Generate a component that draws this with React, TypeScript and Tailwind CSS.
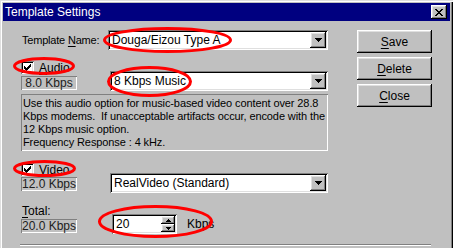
import React from "react"

const raised =
  "shadow-[inset_-1px_-1px_0_#000,inset_1px_1px_0_#fff,inset_-2px_-2px_0_#808080,inset_2px_2px_0_#dfdfdf]"
const sunken =
  "shadow-[inset_1px_1px_0_#808080,inset_-1px_-1px_0_#fff,inset_2px_2px_0_#000,inset_-2px_-2px_0_#dfdfdf]"
const thin = "shadow-[inset_1px_1px_0_#808080,inset_-1px_-1px_0_#fff]"

function Arrow() {
  return (
    <svg width="7" height="4" viewBox="0 0 7 4">
      <path d="M0 0h7v1h-1v1h-1v1h-1v1h-1v-1h-1v-1h-1v-1h-1z" fill="#000" />
    </svg>
  )
}

function Combo({ value, width }: { value: string; width: string }) {
  return (
    <div className={`${width} h-[20px] bg-white ${sunken} flex items-center p-[2px]`}>
      <span className="flex-1 pl-[2px] text-[12px] leading-none whitespace-nowrap">{value}</span>
      <div className={`w-[16px] h-[16px] bg-[#c0c0c0] ${raised} flex items-center justify-center`}>
        <Arrow />
      </div>
    </div>
  )
}

function Check({ hot, rest }: { hot: string; rest: string }) {
  return (
    <div className="flex items-center h-[13px]">
      <div className={`w-[13px] h-[13px] bg-white ${sunken} flex items-center justify-center`}>
        <svg width="7" height="7" viewBox="0 0 7 7">
          <path d="M0 2h1v1h1v1h1v-1h1v-1h1v-1h1v-1h1v3h-1v1h-1v1h-1v1h-1v1h-1v-1h-1v-1h-1z" fill="#000" />
        </svg>
      </div>
      <span className="ml-[5px] text-[12px] leading-none">
        <span className="underline underline-offset-[2px]">{hot}</span>
        {rest}
      </span>
    </div>
  )
}

function Rate({ value }: { value: string }) {
  return (
    <div className={`w-[56px] h-[14px] ${thin} flex items-center justify-center text-[12px] leading-none text-[#202020] whitespace-nowrap`}>
      {value}
    </div>
  )
}

function Button({ hot, rest }: { hot: string; rest: string }) {
  return (
    <div className={`w-[75px] h-[23px] ${raised} flex items-center justify-center text-[12px] leading-none`}>
      <span className="underline underline-offset-[2px]">{hot}</span>
      {rest}
    </div>
  )
}

export default function App() {
  return (
    <div className="w-[453px] h-[248px] overflow-hidden relative bg-[#c0c0c0] font-[family-name:Liberation_Sans,Arial,sans-serif] text-black">
      <div className="h-[260px] pt-[3px] pl-[3px] pr-[3px] shadow-[inset_1px_1px_0_#dfdfdf,inset_2px_2px_0_#fff,inset_-1px_-1px_0_#000,inset_-2px_-2px_0_#808080]">
        <div className="h-[18px] bg-[#000080] flex items-center justify-between pl-[2px] pr-[3px]">
          <span className="text-white text-[12px] leading-none">Template Settings</span>
          <div className={`w-[16px] h-[14px] bg-[#c0c0c0] ${raised} flex items-center justify-center`}>
            <svg width="8" height="7" viewBox="0 0 8 7">
              <path d="M0 0h2v1h1v1h2v-1h1v-1h2v1h-1v1h-1v1h-1v1h1v1h1v1h1v1h-2v-1h-1v-1h-2v1h-1v1h-2v-1h1v-1h1v-1h1v-1h-1v-1h-1v-1h-1z" fill="#000" />
            </svg>
          </div>
        </div>

        <div className="flex pt-[9px] pl-[18px]">
          <div className="w-[307px] flex flex-col text-[12px]">
            <div className="flex items-center h-[20px]">
              <span className="w-[87px] pl-[1px] leading-none whitespace-nowrap text-[11px] tracking-[-0.2px]">
                Template <span className="underline underline-offset-[2px]">N</span>ame:
              </span>
              <Combo value="Douga/Eizou Type A" width="w-[220px]" />
            </div>

            <div className="flex mt-[11px]">
              <div className="w-[89px] flex flex-col">
                <Check hot="A" rest="udio" />
                <div className="mt-[2px]">
                  <Rate value="8.0 Kbps" />
                </div>
              </div>
              <div className="mt-[10px]">
                <Combo value="8 Kbps Music" width="w-[218px]" />
              </div>
            </div>

            <div className={`mt-[3px] h-[57px] ${thin} px-[2px] pt-[3px] text-[11px] leading-[13px] tracking-[-0.1px] whitespace-nowrap`}>
              Use this audio option for music-based video content over 28.8
              <br />
              Kbps modems.&nbsp; If unacceptable artifacts occur, encode with the
              <br />
              12 Kbps music option.
              <br />
              Frequency Response : 4 kHz.
            </div>

            <div className="flex mt-[12px]">
              <div className="w-[89px] flex flex-col">
                <Check hot="V" rest="ideo" />
                <div className="mt-[1px]">
                  <Rate value="12.0 Kbps" />
                </div>
              </div>
              <div className="mt-[10px]">
                <Combo value="RealVideo (Standard)" width="w-[218px]" />
              </div>
            </div>

            <div className="flex mt-[11px]">
              <div className="w-[91px] flex flex-col">
                <span className="h-[14px] leading-[14px] pl-[1px]">
                  <span className="underline underline-offset-[2px]">T</span>otal:
                </span>
                <div className="mt-[1px]">
                  <Rate value="20.0 Kbps" />
                </div>
              </div>
              <div className="mt-[10px] flex items-center h-[20px]">
                <div className={`w-[65px] h-[20px] bg-white ${sunken} flex items-center p-[2px]`}>
                  <span className="flex-1 pl-[2px] leading-none">20</span>
                  <div className="w-[14px] h-[16px] flex flex-col">
                    <div className={`h-[8px] bg-[#c0c0c0] ${raised} flex items-center justify-center`}>
                      <svg width="5" height="3" viewBox="0 0 5 3">
                        <path d="M2 0h1v1h1v1h1v1h-5v-1h1v-1h1z" fill="#000" />
                      </svg>
                    </div>
                    <div className={`h-[8px] bg-[#c0c0c0] ${raised} flex items-center justify-center`}>
                      <svg width="5" height="3" viewBox="0 0 5 3">
                        <path d="M0 0h5v1h-1v1h-1v1h-1v-1h-1v-1h-1z" fill="#000" />
                      </svg>
                    </div>
                  </div>
                </div>
                <span className="ml-[10px] leading-none">Kbps</span>
              </div>
            </div>
          </div>

          <div className="ml-[29px] flex flex-col gap-[4px]">
            <Button hot="S" rest="ave" />
            <Button hot="D" rest="elete" />
            <Button hot="C" rest="lose" />
          </div>
        </div>

        <div className="ml-[17px] mt-[10px] w-[411px] h-[2px] border-t border-[#808080] border-b border-b-white" />
      </div>

      <svg className="absolute inset-0 pointer-events-none" width="453" height="248" viewBox="0 0 453 248">
        <g fill="none" stroke="#ff0000" strokeWidth="3">
          <ellipse cx="167.5" cy="40" rx="63" ry="11.5" />
          <ellipse cx="44" cy="66" rx="29.5" ry="7.5" />
          <ellipse cx="149.5" cy="81.5" rx="41" ry="14" />
          <ellipse cx="44.5" cy="168.5" rx="30" ry="7" />
          <ellipse cx="155.5" cy="221.5" rx="56" ry="15" />
        </g>
      </svg>
    </div>
  )
}
